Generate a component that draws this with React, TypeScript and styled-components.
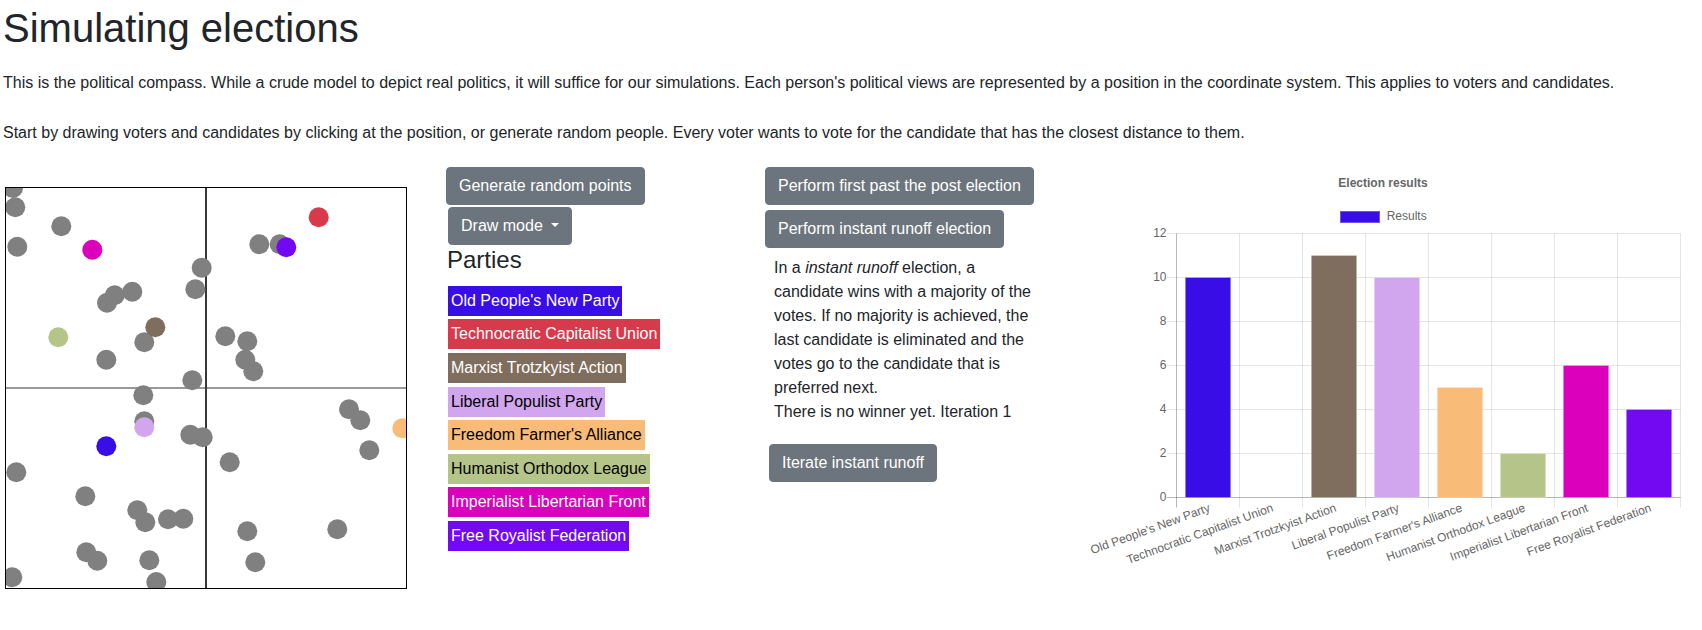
import React from 'react';
import styled, { createGlobalStyle } from 'styled-components';

const GlobalStyle = createGlobalStyle`
  body {
    margin: 0;
    background: #fff;
    color: #212529;
    font-family: "Liberation Sans", Arial, sans-serif;
    font-size: 16px;
    line-height: 1.5;
  }
`;

type Party = { name: string; color: string; text: string; votes: number; x: number; y: number };

const parties: Party[] = [
  { name: "Old People's New Party", color: '#390de6', text: '#fff', votes: 10, x: 100.3, y: 258.3 },
  { name: 'Technocratic Capitalist Union', color: '#d73a4a', text: '#fff', votes: 0, x: 312.7, y: 29.3 },
  { name: 'Marxist Trotzkyist Action', color: '#7f6e5d', text: '#fff', votes: 11, x: 149.3, y: 139.3 },
  { name: 'Liberal Populist Party', color: '#d1a6ef', text: '#000', votes: 10, x: 138.3, y: 239.3 },
  { name: "Freedom Farmer's Alliance", color: '#f8bb78', text: '#000', votes: 5, x: 396.3, y: 240.3 },
  { name: 'Humanist Orthodox League', color: '#b5c589', text: '#000', votes: 2, x: 52.3, y: 149.3 },
  { name: 'Imperialist Libertarian Front', color: '#db00bb', text: '#fff', votes: 6, x: 86.3, y: 61.7 },
  { name: 'Free Royalist Federation', color: '#7209f2', text: '#fff', votes: 4, x: 280.3, y: 59.3 },
];

const voters: [number, number][] = [
  [7, 0], [9.3, 19.3], [55.3, 38.3], [11.3, 58.7], [195.7, 79.7], [189.3, 101.3],
  [108.7, 107.3], [126.3, 103.7], [101, 114.7], [138.3, 154.3], [100.3, 171.7],
  [186.3, 192.3], [253.3, 56.3], [273.7, 56.3], [219.3, 148.3], [241.3, 153.3],
  [239.3, 171.7], [247.3, 183.3], [137.3, 207.3], [138.3, 233.3], [184.3, 246.7],
  [196.7, 249.3], [10.3, 284.3], [79.3, 308.3], [131.3, 322.3], [139.3, 334.3],
  [162, 331.3], [177.3, 330.7], [80.3, 364.3], [91.3, 372.7], [143.3, 372.3],
  [150.3, 394], [6.3, 389.3], [343, 221.3], [354.3, 232.3], [363.3, 262.3],
  [223.7, 274.3], [241.3, 343.3], [249.3, 374.3], [331.3, 341.3],
];

const Page = styled.div`
  padding: 4px 0 0 3px;
`;

const Title = styled.h1`
  margin: 0 0 19px;
  font-size: 40px;
  font-weight: 400;
  line-height: 1.2;
`;

const Lead = styled.p<{ $gap: number }>`
  margin: 0 0 ${p => p.$gap}px;
`;

const Row = styled.div`
  display: flex;
  align-items: flex-start;
`;

const Column = styled.div<{ $width: number }>`
  width: ${p => p.$width}px;
  flex: none;
  display: flex;
  flex-direction: column;
  align-items: flex-start;
`;

const CompassCanvas = styled.svg`
  display: block;
  margin: 20px 0 0 2px;
  border: 1px solid #000;
`;

const Button = styled.button`
  display: inline-block;
  padding: 6px 12px;
  border: 1px solid #6c757d;
  border-radius: 4px;
  background: #6c757d;
  color: #fff;
  font-family: inherit;
  font-size: 16px;
  line-height: 1.5;
  white-space: nowrap;
  cursor: pointer;
`;

const DropdownButton = styled(Button)`
  margin: 2px 0 0 2px;

  &::after {
    content: '';
    display: inline-block;
    margin-left: 0.255em;
    vertical-align: 0.255em;
    border-top: 0.3em solid;
    border-right: 0.3em solid transparent;
    border-left: 0.3em solid transparent;
  }
`;

const SecondButton = styled(Button)`
  margin-top: 5px;
`;

const IterateButton = styled(Button)`
  margin-left: 4px;
`;

const PartiesTitle = styled.h4`
  margin: 1px 0 11px 1px;
  font-size: 24px;
  font-weight: 400;
  line-height: 1.2;
`;

const PartyList = styled.div`
  display: flex;
  flex-direction: column;
  align-items: flex-start;
  gap: 3.6px;
  margin-left: 2px;
`;

const PartyTag = styled.span<{ $bg: string; $fg: string }>`
  padding: 3px;
  line-height: 24px;
  background: ${p => p.$bg};
  color: ${p => p.$fg};
`;

const Explanation = styled.div`
  width: 265px;
  margin: 8px 0 20px 9px;
`;

const ChartCanvas = styled.svg`
  display: block;
  font-family: "Liberation Sans", Arial, sans-serif;
`;

const Compass = () => (
  <CompassCanvas width={400} height={400} viewBox="0 0 400 400">
    <line x1={0} y1={200} x2={400} y2={200} stroke="#777" strokeWidth={1.6} />
    <line x1={200} y1={0} x2={200} y2={400} stroke="#383838" strokeWidth={2} />
    {voters.map(([x, y], i) => (
      <circle key={i} cx={x} cy={y} r={10} fill="#808080" />
    ))}
    {parties.map(p => (
      <circle key={p.name} cx={p.x} cy={p.y} r={10} fill={p.color} />
    ))}
  </CompassCanvas>
);

const C = { left: 93.5, right: 597.5, top: 66.5, zero: 330.5, unit: 22 };
const CAT = (C.right - C.left) / 8;
const BAR = CAT * 0.72;

const ResultsChart = () => (
  <ChartCanvas width={600} height={420} viewBox="0 0 600 420">
    <text x={300} y={20} fontSize={12} fontWeight={700} fill="#666" textAnchor="middle">
      Election results
    </text>
    <rect x={257.5} y={44.5} width={39} height={11} fill={parties[0].color} stroke="#6f55ee" strokeWidth={1} />
    <text x={303.7} y={53} fontSize={12} fill="#666">Results</text>

    {[0, 2, 4, 6, 8, 10, 12].map(v => {
      const y = C.zero - v * C.unit;
      return (
        <g key={v}>
          <line x1={84} y1={y} x2={C.right} y2={y} stroke={v === 0 ? 'rgba(0,0,0,0.28)' : 'rgba(0,0,0,0.1)'} />
          <text x={83.5} y={y + 3} fontSize={12} fill="#666" textAnchor="end">{v}</text>
        </g>
      );
    })}
    {Array.from({ length: 9 }, (_, k) => {
      const x = C.left + k * CAT;
      return (
        <line key={k} x1={x} y1={C.top} x2={x} y2={C.zero + 10} stroke={k === 0 ? 'rgba(0,0,0,0.28)' : 'rgba(0,0,0,0.1)'} />
      );
    })}

    {parties.map((p, k) => {
      const h = p.votes * C.unit;
      const x = C.left + k * CAT + (CAT - BAR) / 2;
      return h > 0 ? (
        <rect key={p.name} x={x} y={C.zero - h} width={BAR} height={h} fill={p.color} stroke="rgba(255,255,255,0.25)" strokeWidth={1} />
      ) : null;
    })}

    {parties.map((p, k) => {
      const cx = C.left + k * CAT + CAT / 2;
      return (
        <text key={p.name} transform={`translate(${cx + 3} 344) rotate(-20)`} fontSize={12} fill="#666" textAnchor="end">
          {p.name}
        </text>
      );
    })}
  </ChartCanvas>
);

export default function App() {
  return (
    <Page>
      <GlobalStyle />
      <Title>Simulating elections</Title>
      <Lead $gap={26}>
        This is the political compass. While a crude model to depict real politics, it will suffice for our simulations.
        Each person's political views are represented by a position in the coordinate system. This applies to voters and candidates.
      </Lead>
      <Lead $gap={22}>
        Start by drawing voters and candidates by clicking at the position, or generate random people. Every voter wants to
        vote for the candidate that has the closest distance to them.
      </Lead>
      <Row>
        <Column $width={443}>
          <Compass />
        </Column>
        <Column $width={319}>
          <Button>Generate random points</Button>
          <DropdownButton>Draw mode </DropdownButton>
          <PartiesTitle>Parties</PartiesTitle>
          <PartyList>
            {parties.map(p => (
              <PartyTag key={p.name} $bg={p.color} $fg={p.text}>{p.name}</PartyTag>
            ))}
          </PartyList>
        </Column>
        <Column $width={318}>
          <Button>Perform first past the post election</Button>
          <SecondButton>Perform instant runoff election</SecondButton>
          <Explanation>
            In a <i>instant runoff</i> election, a candidate wins with a majority of the votes. If no majority is achieved,
            the last candidate is eliminated and the votes go to the candidate that is preferred next.
            <br />
            There is no winner yet. Iteration 1
          </Explanation>
          <IterateButton>Iterate instant runoff</IterateButton>
        </Column>
        <Column $width={600}>
          <ResultsChart />
        </Column>
      </Row>
    </Page>
  );
}
